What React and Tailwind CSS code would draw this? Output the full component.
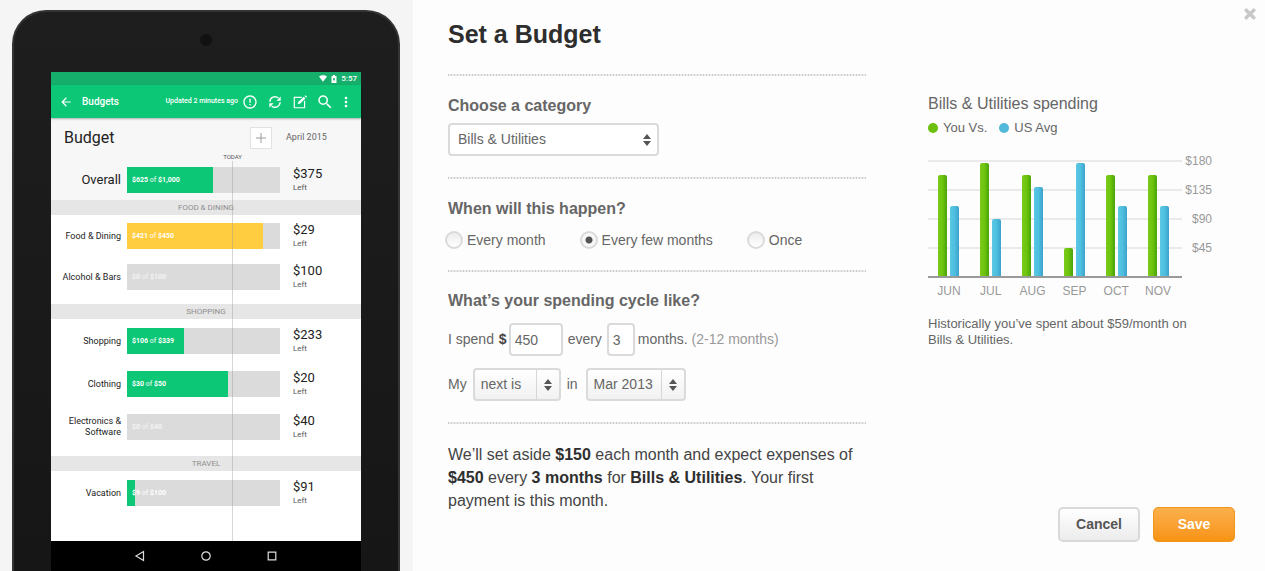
import { useState } from "react"
import { MdArrowBack, MdErrorOutline, MdSearch, MdMoreVert } from "react-icons/md"

const overall = { name: "Overall", spent: 625, total: 1000, left: 375, fill: 56 }

const groups = [
    {
        title: "FOOD & DINING",
        spacing: "pt-2 gap-[15px] pb-[14px]",
        rows: [
            { name: "Food & Dining", spent: 421, total: 450, left: 29, fill: 89, color: "bg-[#ffcd3f]" },
            { name: "Alcohol & Bars", spent: 0, total: 100, left: 100, fill: 0 },
        ],
    },
    {
        title: "SHOPPING",
        spacing: "pt-[9px] gap-[17px] pb-4",
        rows: [
            { name: "Shopping", spent: 106, total: 339, left: 233, fill: 37 },
            { name: "Clothing", spent: 30, total: 50, left: 20, fill: 66 },
            { name: "Electronics & Software", spent: 0, total: 40, left: 40, fill: 0 },
        ],
    },
    {
        title: "TRAVEL",
        spacing: "pt-[9px]",
        rows: [{ name: "Vacation", spent: 9, total: 100, left: 91, fill: 5 }],
    },
]

const months = [
    { label: "JUN", you: 157, avg: 108 },
    { label: "JUL", you: 176, avg: 89 },
    { label: "AUG", you: 157, avg: 138 },
    { label: "SEP", you: 44, avg: 176 },
    { label: "OCT", you: 157, avg: 108 },
    { label: "NOV", you: 157, avg: 108 },
]

const ticks = [180, 135, 90, 45]

const StatusIcons = () => (
    <>
        <svg viewBox="0 0 8 7" className="h-[7px] w-2" fill="#fff">
            <path d="M0 1.6C2.3-.3 5.7-.3 8 1.6L4 6.8z" />
        </svg>
        <svg viewBox="0 0 6 8" className="h-2 w-[6px]">
            <path d="M2 0h2v1h1.5v7h-5V1H2z" fill="#fff" />
            <path d="M2 3.2h2v1.6H3.3v1.4h-.6V4.8H2z" fill="#15ae6a" />
        </svg>
    </>
)

const SyncIcon = () => (
    <svg viewBox="-2 -2 28 28" className="size-4" fill="none" stroke="#fff" strokeWidth="2.4">
        <path d="M3 11.5A9 9 0 0 1 18 5.2" />
        <path d="M21 12.5A9 9 0 0 1 6 18.8" />
        <path d="M22 2.5v7.5H14.5z" fill="#fff" stroke="none" />
        <path d="M2 21.5V14H9.5z" fill="#fff" stroke="none" />
    </svg>
)

const ComposeIcon = () => (
    <svg viewBox="-2 -2 28 28" className="size-4" fill="none" stroke="#fff" strokeWidth="2">
        <path d="M15 4H2v18h18V10" />
        <path d="M8 16l1-4L18.5 2.8l3 3L12 15z" fill="#fff" stroke="none" />
        <path d="M20 1.6l1.6-1.4 2.6 2.6-1.4 1.6z" fill="#fff" stroke="none" />
    </svg>
)

const UpDown = () => (
    <svg viewBox="0 0 8 12" className="h-3 w-2" fill="#555">
        <path d="M4 0l4 5H0zM4 12l4-5H0z" />
    </svg>
)

const BudgetRow = ({ row, large }) => (
    <div className="flex h-[26px] items-center">
        <div className={large ? "w-[70px] text-right text-[13px]" : "w-[70px] pl-2 text-right text-[9px] leading-[11px] whitespace-nowrap"}>
            {row.name === "Electronics & Software" ? <>Electronics &<br />Software</> : row.name}
        </div>
        <div className="relative ml-[6px] h-[26px] flex-1 bg-[#dbdbdb]">
            <div className={`h-full ${row.color || "bg-[#0cc776]"}`} style={{ width: `${row.fill}%` }}></div>
            <div className="absolute inset-0 flex items-center pl-[5px] text-[7px] font-bold text-white">
                <span className={row.spent === 0 ? "opacity-70" : ""}>
                    ${row.spent} <span className="font-medium opacity-80">of</span> ${row.total.toLocaleString("en-US")}
                </span>
            </div>
        </div>
        <div className="w-[81px] pl-[13px]">
            <div className="text-[13px] leading-4">${row.left}</div>
            <div className="text-[8px] leading-3 text-[#555]">Left</div>
        </div>
    </div>
)

const Tablet = () => {
    return (
        <div className="flex flex-col bg-[#f5f5f5] pt-[10px] pr-[13px] pl-3">
            <div className="flex flex-1 flex-col rounded-t-[34px] border-x-2 border-t-2 border-[#343434] bg-linear-to-b from-[#1e1e1e] to-[#161616] px-[37px] font-['Roboto',sans-serif] text-[#222]">
                <div className="flex h-[60px] justify-center pt-[22px]">
                    <div className="size-3 rounded-full bg-[#111]"></div>
                </div>
                <div className="flex h-[13px] items-center justify-end gap-1 bg-[#15ae6a] pr-1 text-[8px] font-medium text-white">
                    <StatusIcons />
                    <span>5:57</span>
                </div>
                <div className="z-10 flex h-[33px] items-center bg-[#0cc776] pr-[7px] pl-2 text-white shadow-[0_1px_2px_rgba(0,0,0,0.3)]">
                    <button aria-label="Back"><MdArrowBack className="size-[14px]" /></button>
                    <span className="ml-[9px] text-[10px] font-medium">Budgets</span>
                    <span className="ml-auto text-[7px] font-medium whitespace-nowrap">Updated 2 minutes ago</span>
                    <div className="ml-1 flex items-center gap-[9px]">
                        <button aria-label="Alerts"><MdErrorOutline className="size-4" /></button>
                        <button aria-label="Refresh"><SyncIcon /></button>
                        <button aria-label="Compose"><ComposeIcon /></button>
                        <button aria-label="Search" className="-mx-px"><MdSearch className="size-[18px]" /></button>
                    </div>
                    <button aria-label="More" className="ml-[5px]"><MdMoreVert className="size-4" /></button>
                </div>
                <div className="relative flex flex-1 flex-col bg-white">
                    <div className="h-[82px] bg-[#f7f7f7]">
                        <div className="flex h-10 items-center pl-[13px]">
                            <h2 className="flex-1 text-[16px]">Budget</h2>
                            <button aria-label="Add budget" className="flex size-[22px] items-center justify-center border border-[#e2e2e2] bg-white">
                                <svg viewBox="0 0 10 10" className="size-[10px]" stroke="#999">
                                    <path d="M5 0v10M0 5h10" />
                                </svg>
                            </button>
                            <span className="w-[89px] pl-[14px] text-[9px] text-[#666]">April 2015</span>
                        </div>
                        <div className="pt-[9px]">
                            <BudgetRow row={overall} large />
                        </div>
                    </div>
                    {
                        groups.map((group) => (
                            <div key={group.title}>
                                <h3 className="h-[15px] bg-[#e6e6e6] text-center text-[8px] leading-[15px] text-[#8f8f8f]">{group.title}</h3>
                                <div className={`flex flex-col ${group.spacing}`}>
                                    {group.rows.map((row) => <BudgetRow key={row.name} row={row} />)}
                                </div>
                            </div>
                        ))
                    }
                    <div className="pointer-events-none absolute top-[34px] right-[81px] bottom-0 left-[76px]">
                        <div className="absolute inset-y-0 left-[69%] flex w-0 flex-col items-center">
                            <span className="text-[6px] leading-[9px] text-[#555]">TODAY</span>
                            <div className="w-px flex-1 bg-[#999]/40"></div>
                        </div>
                    </div>
                </div>
                <div className="flex h-[30px] items-center justify-center gap-[54px] bg-black">
                    <button aria-label="Back">
                        <svg viewBox="0 0 12 12" className="size-3" fill="none" stroke="#ddd" strokeWidth="1.2"><path d="M9.5 1.5v9L2 6z" /></svg>
                    </button>
                    <button aria-label="Home">
                        <svg viewBox="0 0 12 12" className="size-3" fill="none" stroke="#ddd" strokeWidth="1.2"><circle cx="6" cy="6" r="4.2" /></svg>
                    </button>
                    <button aria-label="Recent apps">
                        <svg viewBox="0 0 12 12" className="size-3" fill="none" stroke="#ddd" strokeWidth="1.2"><path d="M2.2 2.2h7.6v7.6H2.2z" /></svg>
                    </button>
                </div>
            </div>
        </div>
    )
}

const Rule = ({ className }) => (
    <div className={`h-[2px] bg-[repeating-linear-gradient(90deg,#cbcbcb_0_1px,#ececec_1px_3px)] ${className}`}></div>
)

const SplitSelect = ({ label, options, className }) => (
    <div className={`relative ${className}`}>
        <select aria-label={label} className="h-[33px] w-full appearance-none rounded-[4px] border-2 border-[#dadada] bg-linear-to-b from-white to-[#f1f1f1] pl-[6px]">
            {options.map((option) => <option key={option}>{option}</option>)}
        </select>
        <div className="pointer-events-none absolute inset-y-[2px] right-[2px] flex w-[23px] items-center justify-center border-l border-[#d6d6d6]">
            <UpDown />
        </div>
    </div>
)

const BudgetForm = () => {
    const [when, setWhen] = useState("Every few months")

    return (
        <div className="flex-1 text-[14px] text-[#666]">
            <h1 className="text-[25px] leading-8 font-bold text-[#2e2e2e]">Set a Budget</h1>
            <Rule className="mt-6" />

            <label htmlFor="category" className="mt-5 block text-[16px] leading-5 font-bold">Choose a category</label>
            <div className="relative mt-[7px] w-[211px]">
                <select id="category" className="h-[33px] w-full appearance-none rounded-[4px] border-2 border-[#dadada] bg-white pl-2">
                    <option>Bills & Utilities</option>
                </select>
                <div className="pointer-events-none absolute inset-y-0 right-2 flex items-center">
                    <UpDown />
                </div>
            </div>
            <Rule className="mt-[21px]" />

            <fieldset className="mt-5">
                <legend className="text-[16px] leading-5 font-bold">When will this happen?</legend>
                <div className="mt-[11px] -ml-[3px] flex gap-[34px]">
                    {
                        ["Every month", "Every few months", "Once"].map((option) => (
                            <label key={option} className="flex h-5 items-center gap-1 whitespace-nowrap">
                                <input
                                    type="radio"
                                    name="when"
                                    checked={when === option}
                                    onChange={() => setWhen(option)}
                                    className="size-[18px] appearance-none rounded-full border-2 border-[#dadada] bg-linear-to-b from-[#ececec] to-white checked:bg-[radial-gradient(circle,#555_0_3px,#f8f8f8_4px)]"
                                />
                                {option}
                            </label>
                        ))
                    }
                </div>
            </fieldset>
            <Rule className="mt-5" />

            <h2 className="mt-[19px] text-[16px] leading-5 font-bold">What’s your spending cycle like?</h2>
            <div className="mt-3 flex h-[33px] items-center whitespace-nowrap">
                <label htmlFor="amount">I spend <b className="ml-px text-[#444]">$</b></label>
                <input id="amount" defaultValue="450" className="ml-[2px] h-[33px] w-[54px] rounded-[4px] border-2 border-[#dadada] bg-white pl-1" />
                <label htmlFor="interval" className="ml-[5px]">every</label>
                <input id="interval" defaultValue="3" className="ml-[5px] h-[33px] w-7 rounded-[4px] border-2 border-[#dadada] bg-white pl-1" />
                <span className="ml-[3px]">months. <span className="text-[#999]">(2-12 months)</span></span>
            </div>
            <div className="mt-3 flex h-[33px] items-center">
                <span>My</span>
                <SplitSelect label="Which payment" options={["next is", "last was"]} className="ml-[6px] w-[88px]" />
                <span className="ml-[6px]">in</span>
                <SplitSelect label="Month" options={["Mar 2013", "Apr 2013", "May 2013"]} className="ml-2 w-[100px]" />
            </div>
            <Rule className="mt-[21px]" />

            <p className="mt-[19px] text-[16px] leading-[23px] text-[#444]">
                We’ll set aside <b className="text-[#2e2e2e]">$150</b> each month and expect expenses of{" "}
                <b className="text-[#2e2e2e]">$450</b> every <b className="text-[#2e2e2e]">3 months</b> for{" "}
                <b className="text-[#2e2e2e]">Bills & Utilities</b>. Your first <span>payment is this month.</span>
            </p>
        </div>
    )
}

const SpendingChart = () => (
    <div className="pr-[23px] text-[#666]">
        <h2 className="text-[16px] leading-5">Bills & Utilities spending</h2>
        <div className="mt-1 flex items-center gap-3 text-[13px] leading-5">
            <span className="flex items-center gap-[5px]"><i className="size-[10px] rounded-full bg-[#6cbf0b]"></i>You Vs.</span>
            <span className="flex items-center gap-[5px]"><i className="size-[10px] rounded-full bg-[#52b9db]"></i>US Avg</span>
        </div>
        <div className="mt-[22px] flex text-[12px] text-[#999]">
            <div className="flex-1">
                <div className="relative h-[118px] border-b-2 border-[#999]">
                    <div className="absolute inset-0 flex flex-col">
                        {ticks.map((tick) => <div key={tick} className="flex-1 border-t-2 border-[#eaeaea]"></div>)}
                    </div>
                    <div className="relative flex h-full justify-around pr-[3px]">
                        {
                            months.map((month) => (
                                <div key={month.label} className="flex items-end gap-[3px]">
                                    <div className="w-[9px] rounded-t-[2px] bg-linear-to-r from-[#7ccb1c] via-[#6cc40c] to-[#4ba30b]" style={{ height: `${month.you / 1.8}%` }}></div>
                                    <div className="w-[9px] rounded-t-[2px] bg-linear-to-r from-[#5cc8e4] via-[#4dbfdf] to-[#3da2cd]" style={{ height: `${month.avg / 1.8}%` }}></div>
                                </div>
                            ))
                        }
                    </div>
                </div>
                <div className="flex justify-around pt-1 pr-[3px]">
                    {months.map((month) => <span key={month.label} className="flex w-[21px] justify-center leading-[18px]">{month.label}</span>)}
                </div>
            </div>
            <div className="-mt-2 flex h-[116px] w-[30px] flex-col text-right">
                {ticks.map((tick) => <span key={tick} className="flex-1 leading-[18px]">${tick}</span>)}
            </div>
        </div>
        <p className="mt-4 text-[13px] leading-4">Historically you’ve spent about $59/month on Bills & Utilities.</p>
    </div>
)

const App = () => {
    return (
        <div className="grid min-h-screen grid-cols-[413fr_852fr] bg-[#fdfdfd]">
            <Tablet />
            <div className="relative flex gap-[62px] pt-[18px] pr-[30px] pl-[35px] font-['Liberation_Sans',Arial,sans-serif]">
                <button aria-label="Close" className="absolute top-2 right-[9px]">
                    <svg viewBox="0 0 12 12" className="size-3" stroke="#c8c8c8" strokeWidth="3.4">
                        <path d="M1.2 1.2l9.6 9.6M10.8 1.2l-9.6 9.6" />
                    </svg>
                </button>
                <BudgetForm />
                <div className="flex w-[307px] flex-col justify-between pt-[76px] pb-[29px]">
                    <SpendingChart />
                    <div className="flex justify-end gap-[13px] text-[14px] font-bold">
                        <button className="h-[35px] w-[82px] rounded-[5px] border-2 border-[#d9d9d9] bg-linear-to-b from-white to-[#ececec] text-[#555]">Cancel</button>
                        <button className="h-[35px] w-[82px] rounded-[5px] border border-[#f0951f] bg-linear-to-b from-[#fbb04a] to-[#f7930f] text-white">Save</button>
                    </div>
                </div>
            </div>
        </div>
    )
}
export default App
